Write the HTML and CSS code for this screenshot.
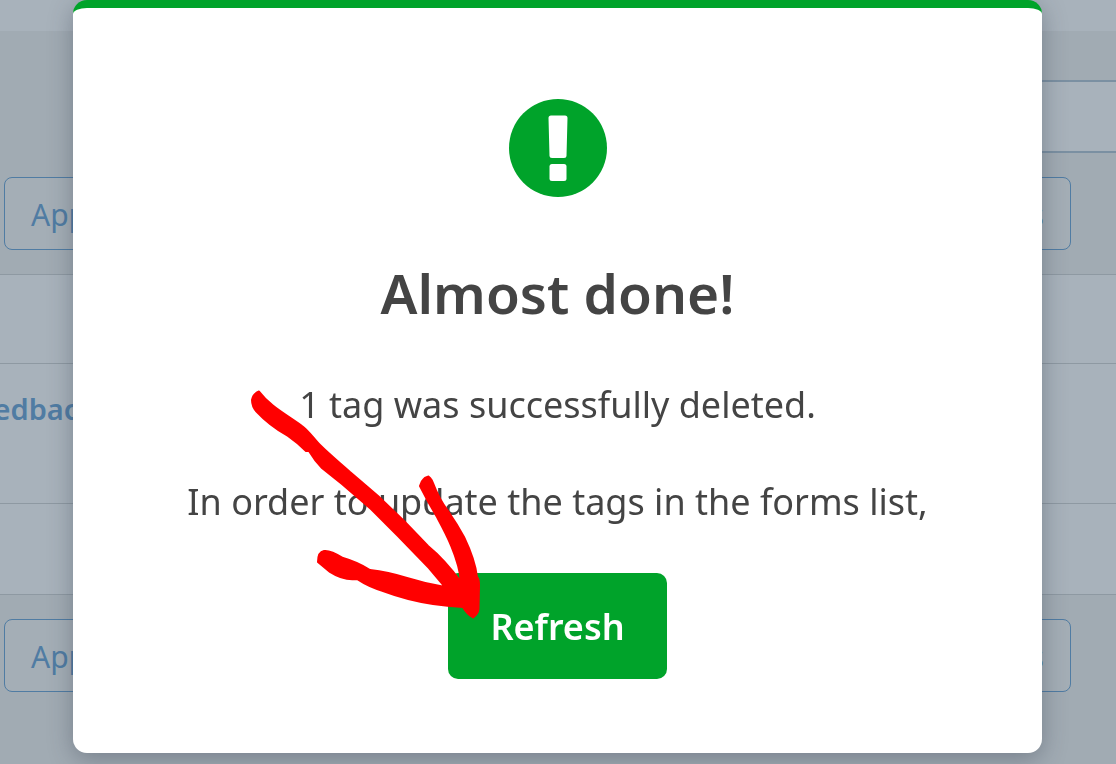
FILE: index.html
```html
<!DOCTYPE html>
<html lang="en">
<head>
    <meta charset="UTF-8">
    <title>Forms</title>
    <link rel="stylesheet" href="styles.css">
</head>
<body>

<div class="page">
    <div class="search-bar">
        <input class="search-input" type="search" aria-label="Search forms">
    </div>
    <div class="toolbar">
        <button class="tool-button" type="button">Apply</button>
        <button class="tool-button" type="button">Manage Tags</button>
    </div>
    <table class="forms">
        <tr class="head-row"><td></td></tr>
        <tr class="form-row"><td><a class="form-name" href="#">Feedback</a></td></tr>
        <tr class="foot-row"><td></td></tr>
    </table>
    <div class="toolbar">
        <button class="tool-button" type="button">Apply</button>
        <button class="tool-button" type="button">Manage Tags</button>
    </div>
</div>

<div class="overlay">
    <div class="modal" role="dialog" aria-labelledby="modalTitle">
        <svg class="modal-icon" viewBox="0 0 98 98" aria-hidden="true">
            <circle cx="49" cy="49" r="49"/>
            <path d="M42 16.500H56Q58.500 16.500 58.500 19L57.500 57Q57.500 59 55 59H43Q40.500 59 40.500 57L39.500 19Q39.500 16.500 42 16.500Z"/>
            <rect x="40.500" y="65" width="17" height="17" rx="2.500"/>
        </svg>
        <h1 class="modal-title" id="modalTitle">Almost done!</h1>
        <p class="modal-text">1 tag was successfully deleted.</p>
        <p class="modal-text">In order to update the tags in the forms list,</p>
        <button class="refresh-button" type="button">Refresh</button>

        <svg class="arrow" viewBox="0 0 270 260" aria-hidden="true">
            <path d="M12 30Q13 24 19 21.500C31 37 44 43 62 56C68 60 74 69 80 75C90 85 100 93 110 102L138 126L164 151L188 176C199 185 210 197 221 212C219 187 204 160 197 147Q188 132 180 116Q182 108 188.500 106.500Q191 108 193 113Q199 129 208 141Q217 154 224 167Q235 190 237 207Q239 209 239 215L238.500 239Q238 244 233 247.500Q227 244 223 237Q207 236 193 234Q167 230 143 221Q129 217 117 209Q104 211 90 202L78 192Q78 182 84 181Q90 180 103 188Q117 192 130 200Q148 202 167 208Q186 214 205 217L189 198L158 166L131 139L102 114L82 98Q75 91 69 81L66 81Q58 73 48 66Q29 55 17 42Q12 37 12 30Z"/>
        </svg>
    </div>
</div>

</body>
</html>
```
FILE: styles.css
```css
* {
    box-sizing: border-box;
}
html, body {
    margin: 0;
    padding: 0;
    height: 100%;
    font-family: "Noto Sans", "Open Sans", sans-serif;
    background-color: #a1abb3;
    overflow: hidden;
}
.page {
    border-top: 31px solid #a8b2bb;
    color: #507ca3;
}
.search-bar {
    display: flex;
    justify-content: flex-end;
    padding-top: 49px;
}
.search-input {
    width: 33%;
    height: 73px;
    margin-right: -20px;
    padding: 0 20px;
    border: 2px solid #7b90a2;
    border-radius: 8px;
    background-color: #a8b2bb;
    font: inherit;
    font-size: 30px;
}
.toolbar {
    display: flex;
    justify-content: space-between;
    padding: 24px 45px 24px 4px;
}
.tool-button {
    height: 73px;
    padding: 2px 26px 0;
    border: 1px solid #507ca3;
    border-radius: 8px;
    background-color: #a4aeb6;
    color: #507ca3;
    font: inherit;
    font-size: 30px;
}
.forms {
    width: 100%;
    border-collapse: collapse;
    background-color: #a8b2bb;
}
.forms td {
    padding: 0;
    border-top: 1px solid #8e99a2;
    border-bottom: 1px solid #8e99a2;
    vertical-align: top;
}
.head-row {
    height: 89px;
}
.form-row {
    height: 140px;
}
.foot-row {
    height: 91px;
}
.form-name {
    display: block;
    margin: 24px 0 0 -39px;
    color: #507ca3;
    font-size: 29px;
    font-weight: 600;
    line-height: 42px;
    text-decoration: none;
}
.overlay {
    position: fixed;
    top: 0; left: 0;
    width: 100%;
    height: 100%;
    padding: 0 74px 0 73px;
}
.modal {
    position: relative;
    display: flex;
    flex-direction: column;
    align-items: center;
    padding: 91px 40px 74px;
    border-top: 8px solid #00a32a;
    border-radius: 14px;
    background-color: #fff;
    box-shadow: 0 6px 24px rgba(40, 50, 65, 0.35);
    color: #444;
    text-align: center;
}
.modal-icon {
    width: 98px;
    height: 98px;
    fill: #00a32a;
}
.modal-icon path, .modal-icon rect {
    fill: #fff;
}
.modal-title {
    margin: 54px 0 42px;
    font-size: 55px;
    font-weight: 600;
    line-height: 84px;
}
.modal-text {
    margin: 0 0 41px;
    font-size: 36px;
    line-height: 56px;
}
.refresh-button {
    height: 106px;
    margin-top: 2px;
    padding: 0 42px;
    border: none;
    border-radius: 10px;
    background-color: #00a32a;
    color: #fff;
    font: inherit;
    font-size: 36px;
    font-weight: 600;
    cursor: pointer;
}
/* hand-drawn pointer to the refresh button */
.arrow {
    position: absolute;
    top: 362px;
    left: calc(50% - 318px);
    width: 270px;
    height: 260px;
    fill: #f00;
    stroke: #f00;
    stroke-width: 2px;
    stroke-linejoin: round;
    pointer-events: none;
}
```
